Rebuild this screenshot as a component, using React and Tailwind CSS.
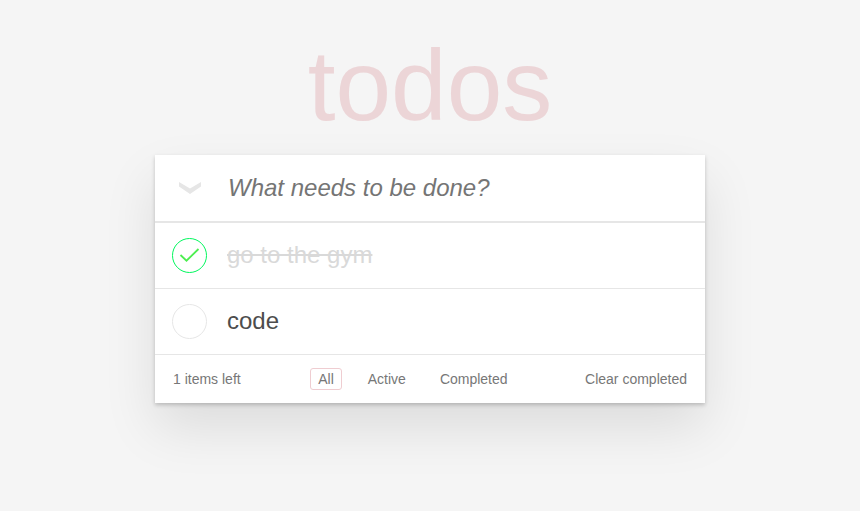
const todos = [
  { id: "gym", title: "go to the gym", done: true },
  { id: "code", title: "code", done: false },
];

const filters = ["All", "Active", "Completed"];

function TodoItem({ todo }) {
  return (
    <li className="border-b border-[#e6e6e6]">
      <label className="relative flex h-[65px] items-center gap-5 px-[17px]">
        <input
          type="checkbox"
          defaultChecked={todo.done}
          className="peer sr-only"
        />
        <svg
          viewBox="0 0 35 35"
          fill="none"
          aria-hidden="true"
          className="size-[35px] shrink-0 text-[#e6e6e6] peer-checked:text-[#00f75d] [&>path]:opacity-0 peer-checked:[&>path]:opacity-100"
        >
          <circle cx="17.5" cy="17.5" r="17" stroke="currentColor" />
          <path d="M8.5 17 14.5 22.7 26.5 11" stroke="#4dee50" strokeWidth="1.8" />
        </svg>
        <span className="pb-0.5 text-2xl text-[#4d4d4d] peer-checked:text-[#d9d9d9] peer-checked:line-through">
          {todo.title}
        </span>
      </label>
    </li>
  );
}

export default function App() {
  return (
    <div className="min-h-screen bg-[#f5f5f5] px-4 pt-[28px] pb-8 font-['Liberation_Sans',Arial,sans-serif]">
      <h1 className="mb-[13px] text-center text-[100px] leading-[114px] text-[#ecd5d7]">
        todos
      </h1>
      <main className="mx-auto max-w-[550px] bg-white shadow-[0_2px_4px_0_rgba(0,0,0,0.2),0_25px_50px_0_rgba(0,0,0,0.1)]">
        <form className="flex items-center gap-5 border-b-2 border-[#e6e6e6] px-[17px]">
          <button
            type="button"
            aria-label="Mark all as complete"
            className="flex size-[35px] shrink-0 items-center justify-center"
          >
            <svg viewBox="0 0 22 12" className="h-3 w-[22px] fill-[#e6e6e6]" aria-hidden="true">
              <path d="M0 0 11 6.5 22 0V4.5L11 12 0 4.5Z" />
            </svg>
          </button>
          <input
            type="text"
            aria-label="New todo"
            placeholder="What needs to be done?"
            className="h-[66px] min-w-0 flex-1 px-px text-2xl text-[#4d4d4d] outline-none placeholder:text-[#757575] placeholder:italic"
          />
        </form>
        <ul>
          {todos.map((todo) => (
            <TodoItem key={todo.id} todo={todo} />
          ))}
        </ul>
        <footer className="flex min-h-[48px] flex-wrap items-center justify-between px-[18px] text-sm text-[#777777]">
          <span>1 items left</span>
          <nav className="flex gap-[18px]">
            {filters.map((name) => (
              <a
                key={name}
                href={`#${name.toLowerCase()}`}
                aria-current={name === "All" ? "page" : undefined}
                className="rounded-[3px] border border-transparent px-[7px] aria-[current=page]:border-[#efcdd1]"
              >
                {name}
              </a>
            ))}
          </nav>
          <button type="button">Clear completed</button>
        </footer>
      </main>
    </div>
  );
}
